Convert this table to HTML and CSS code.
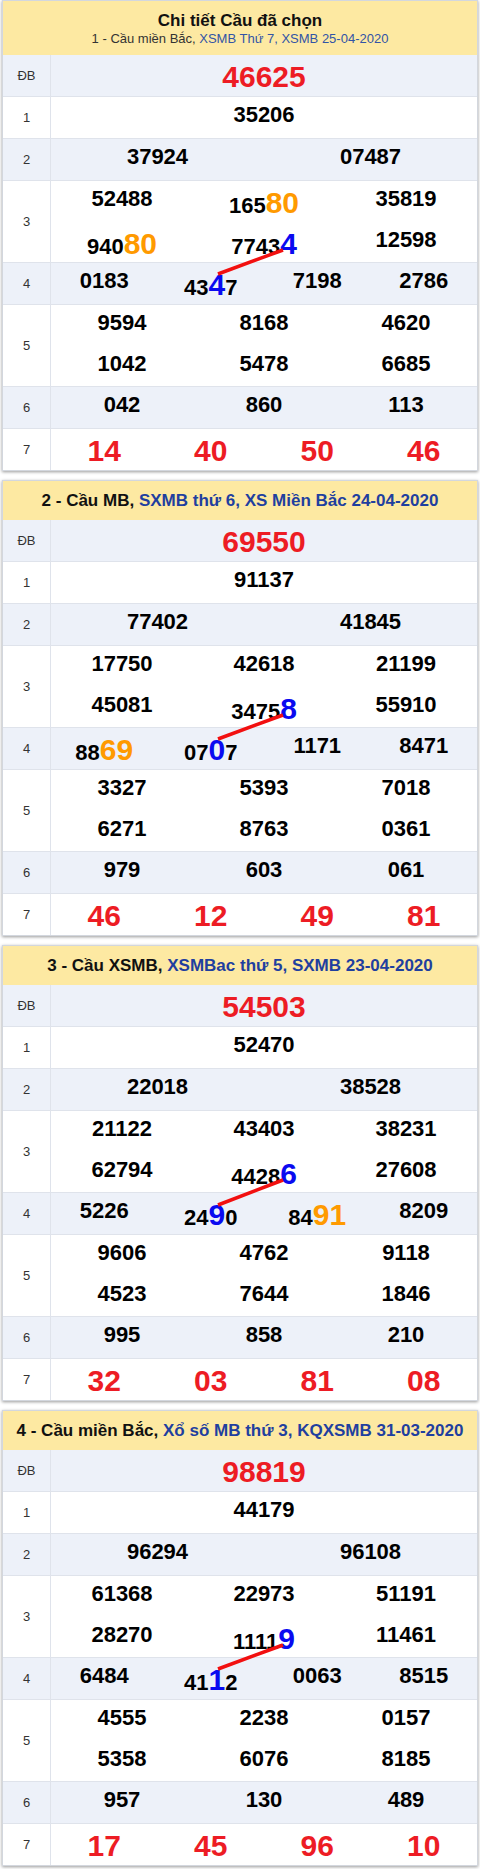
FILE: index.html
```html
<!DOCTYPE html>
<html lang="vi">
<head>
<meta charset="utf-8">
<title>Chi tiết Cầu đã chọn</title>
<link rel="stylesheet" href="styles.css">
</head>
<body>
<div class="page">

  <section class="cau">
    <header class="cau-head first">
      <div class="cau-title">Chi tiết Cầu đã chọn</div>
      <div class="cau-sub">1 - Cầu miền Bắc, <span class="blue">XSMB Thứ 7, XSMB 25-04-2020</span></div>
    </header>
    <div class="rows">
      <svg class="link" viewBox="0 0 474 416"><line x1="280" y1="195" x2="215" y2="219"/></svg>
      <div class="row alt"><div class="lbl">ĐB</div><div class="vals"><div class="line c1"><span class="n big red">46625</span></div></div></div>
      <div class="row"><div class="lbl">1</div><div class="vals"><div class="line c1"><span class="n">35206</span></div></div></div>
      <div class="row alt"><div class="lbl">2</div><div class="vals"><div class="line c2"><span class="n">37924</span><span class="n">07487</span></div></div></div>
      <div class="row dbl"><div class="lbl">3</div><div class="vals">
        <div class="line c3"><span class="n">52488</span><span class="n">165<b class="hl o">80</b></span><span class="n">35819</span></div>
        <div class="line c3"><span class="n">940<b class="hl o">80</b></span><span class="n">7743<b class="hl b">4</b></span><span class="n">12598</span></div>
      </div></div>
      <div class="row alt"><div class="lbl">4</div><div class="vals"><div class="line c4"><span class="n">0183</span><span class="n">43<b class="hl b">4</b>7</span><span class="n">7198</span><span class="n">2786</span></div></div></div>
      <div class="row dbl"><div class="lbl">5</div><div class="vals">
        <div class="line c3"><span class="n">9594</span><span class="n">8168</span><span class="n">4620</span></div>
        <div class="line c3"><span class="n">1042</span><span class="n">5478</span><span class="n">6685</span></div>
      </div></div>
      <div class="row alt"><div class="lbl">6</div><div class="vals"><div class="line c3"><span class="n">042</span><span class="n">860</span><span class="n">113</span></div></div></div>
      <div class="row"><div class="lbl">7</div><div class="vals"><div class="line c4"><span class="n big red">14</span><span class="n big red">40</span><span class="n big red">50</span><span class="n big red">46</span></div></div></div>
    </div>
  </section>

  <section class="cau">
    <header class="cau-head">
      <div class="cau-h">2 - Cầu MB, <span class="blue">SXMB thứ 6, XS Miền Bắc 24-04-2020</span></div>
    </header>
    <div class="rows">
      <svg class="link" viewBox="0 0 474 416"><line x1="280" y1="195" x2="215" y2="219"/></svg>
      <div class="row alt"><div class="lbl">ĐB</div><div class="vals"><div class="line c1"><span class="n big red">69550</span></div></div></div>
      <div class="row"><div class="lbl">1</div><div class="vals"><div class="line c1"><span class="n">91137</span></div></div></div>
      <div class="row alt"><div class="lbl">2</div><div class="vals"><div class="line c2"><span class="n">77402</span><span class="n">41845</span></div></div></div>
      <div class="row dbl"><div class="lbl">3</div><div class="vals">
        <div class="line c3"><span class="n">17750</span><span class="n">42618</span><span class="n">21199</span></div>
        <div class="line c3"><span class="n">45081</span><span class="n">3475<b class="hl b">8</b></span><span class="n">55910</span></div>
      </div></div>
      <div class="row alt"><div class="lbl">4</div><div class="vals"><div class="line c4"><span class="n">88<b class="hl o">69</b></span><span class="n">07<b class="hl b">0</b>7</span><span class="n">1171</span><span class="n">8471</span></div></div></div>
      <div class="row dbl"><div class="lbl">5</div><div class="vals">
        <div class="line c3"><span class="n">3327</span><span class="n">5393</span><span class="n">7018</span></div>
        <div class="line c3"><span class="n">6271</span><span class="n">8763</span><span class="n">0361</span></div>
      </div></div>
      <div class="row alt"><div class="lbl">6</div><div class="vals"><div class="line c3"><span class="n">979</span><span class="n">603</span><span class="n">061</span></div></div></div>
      <div class="row"><div class="lbl">7</div><div class="vals"><div class="line c4"><span class="n big red">46</span><span class="n big red">12</span><span class="n big red">49</span><span class="n big red">81</span></div></div></div>
    </div>
  </section>

  <section class="cau">
    <header class="cau-head">
      <div class="cau-h">3 - Cầu XSMB, <span class="blue">XSMBac thứ 5, SXMB 23-04-2020</span></div>
    </header>
    <div class="rows">
      <svg class="link" viewBox="0 0 474 416"><line x1="280" y1="195" x2="215" y2="220"/></svg>
      <div class="row alt"><div class="lbl">ĐB</div><div class="vals"><div class="line c1"><span class="n big red">54503</span></div></div></div>
      <div class="row"><div class="lbl">1</div><div class="vals"><div class="line c1"><span class="n">52470</span></div></div></div>
      <div class="row alt"><div class="lbl">2</div><div class="vals"><div class="line c2"><span class="n">22018</span><span class="n">38528</span></div></div></div>
      <div class="row dbl"><div class="lbl">3</div><div class="vals">
        <div class="line c3"><span class="n">21122</span><span class="n">43403</span><span class="n">38231</span></div>
        <div class="line c3"><span class="n">62794</span><span class="n">4428<b class="hl b">6</b></span><span class="n">27608</span></div>
      </div></div>
      <div class="row alt"><div class="lbl">4</div><div class="vals"><div class="line c4"><span class="n">5226</span><span class="n">24<b class="hl b">9</b>0</span><span class="n">84<b class="hl o">91</b></span><span class="n">8209</span></div></div></div>
      <div class="row dbl"><div class="lbl">5</div><div class="vals">
        <div class="line c3"><span class="n">9606</span><span class="n">4762</span><span class="n">9118</span></div>
        <div class="line c3"><span class="n">4523</span><span class="n">7644</span><span class="n">1846</span></div>
      </div></div>
      <div class="row alt"><div class="lbl">6</div><div class="vals"><div class="line c3"><span class="n">995</span><span class="n">858</span><span class="n">210</span></div></div></div>
      <div class="row"><div class="lbl">7</div><div class="vals"><div class="line c4"><span class="n big red">32</span><span class="n big red">03</span><span class="n big red">81</span><span class="n big red">08</span></div></div></div>
    </div>
  </section>

  <section class="cau">
    <header class="cau-head">
      <div class="cau-h">4 - Cầu miền Bắc, <span class="blue">Xổ số MB thứ 3, KQXSMB 31-03-2020</span></div>
    </header>
    <div class="rows">
      <svg class="link" viewBox="0 0 474 416"><line x1="280" y1="195" x2="215" y2="219"/></svg>
      <div class="row alt"><div class="lbl">ĐB</div><div class="vals"><div class="line c1"><span class="n big red">98819</span></div></div></div>
      <div class="row"><div class="lbl">1</div><div class="vals"><div class="line c1"><span class="n">44179</span></div></div></div>
      <div class="row alt"><div class="lbl">2</div><div class="vals"><div class="line c2"><span class="n">96294</span><span class="n">96108</span></div></div></div>
      <div class="row dbl"><div class="lbl">3</div><div class="vals">
        <div class="line c3"><span class="n">61368</span><span class="n">22973</span><span class="n">51191</span></div>
        <div class="line c3"><span class="n">28270</span><span class="n">1111<b class="hl b">9</b></span><span class="n">11461</span></div>
      </div></div>
      <div class="row alt"><div class="lbl">4</div><div class="vals"><div class="line c4"><span class="n">6484</span><span class="n">41<b class="hl b">1</b>2</span><span class="n">0063</span><span class="n">8515</span></div></div></div>
      <div class="row dbl"><div class="lbl">5</div><div class="vals">
        <div class="line c3"><span class="n">4555</span><span class="n">2238</span><span class="n">0157</span></div>
        <div class="line c3"><span class="n">5358</span><span class="n">6076</span><span class="n">8185</span></div>
      </div></div>
      <div class="row alt"><div class="lbl">6</div><div class="vals"><div class="line c3"><span class="n">957</span><span class="n">130</span><span class="n">489</span></div></div></div>
      <div class="row"><div class="lbl">7</div><div class="vals"><div class="line c4"><span class="n big red">17</span><span class="n big red">45</span><span class="n big red">96</span><span class="n big red">10</span></div></div></div>
    </div>
  </section>

</div>
</body>
</html>
```
FILE: styles.css
```css
html, body {
  margin: 0;
  padding: 0;
  background: #ffffff;
}

body {
  font-family: "Liberation Sans", Arial, sans-serif;
  color: #000;
}

.page {
  padding: 0 2px 3px 2px;
}

.cau {
  border: 1px solid #d3d7de;
  background: #ffffff;
  box-shadow: 0 1px 3px rgba(0, 0, 0, 0.4);
  margin-bottom: 9px;
}

.cau:last-child {
  margin-bottom: 0;
}

.cau-head {
  background: #fde9a2;
  height: 39px;
  display: flex;
  flex-direction: column;
  justify-content: center;
  align-items: center;
  text-align: center;
  color: #111;
}

.cau-head.first {
  height: 53px;
  padding-top: 1px;
}

.cau-title {
  font-size: 17px;
  font-weight: bold;
  line-height: 19px;
}

.cau-sub {
  font-size: 13px;
  line-height: 16px;
  margin-top: 1px;
  color: #333;
}

.cau-sub .blue {
  color: #3254a6;
}

.cau-h {
  font-size: 17px;
  font-weight: bold;
  line-height: 20px;
}

.cau-h .blue {
  color: #1f3f9f;
}

.rows {
  position: relative;
}

.link {
  position: absolute;
  left: 0;
  top: 0;
  width: 474px;
  height: 416px;
  pointer-events: none;
  z-index: 2;
}

.link line {
  stroke: #f21010;
  stroke-width: 3.5;
  stroke-linecap: butt;
}

.row {
  display: flex;
  border-bottom: 1px solid #dfe3eb;
  background: #ffffff;
}

.row:last-child {
  border-bottom: 0;
}

.row.alt {
  background: #edf1f9;
}

.lbl {
  width: 47px;
  flex: none;
  border-right: 1px solid #dfe3eb;
  display: flex;
  align-items: center;
  justify-content: center;
  font-size: 13px;
  color: #333;
}

.vals {
  flex: 1;
}

.line {
  display: grid;
  height: 41px;
}

.row.dbl .line {
  height: 40.5px;
}

.c1 { grid-template-columns: 1fr; }
.c2 { grid-template-columns: repeat(2, 1fr); }
.c3 { grid-template-columns: repeat(3, 1fr); }
.c4 { grid-template-columns: repeat(4, 1fr); }

.n {
  display: block;
  text-align: center;
  padding-top: 5px;
  font-size: 22px;
  font-weight: bold;
  line-height: normal;
  color: #000;
  white-space: nowrap;
}

.n.big {
  font-size: 30px;
}

.n.red {
  color: #ed1c24;
}

.hl {
  font-size: 30px;
  font-weight: bold;
}

.hl.o {
  color: #ff9a00;
}

.hl.b {
  color: #0a0af0;
}
```
